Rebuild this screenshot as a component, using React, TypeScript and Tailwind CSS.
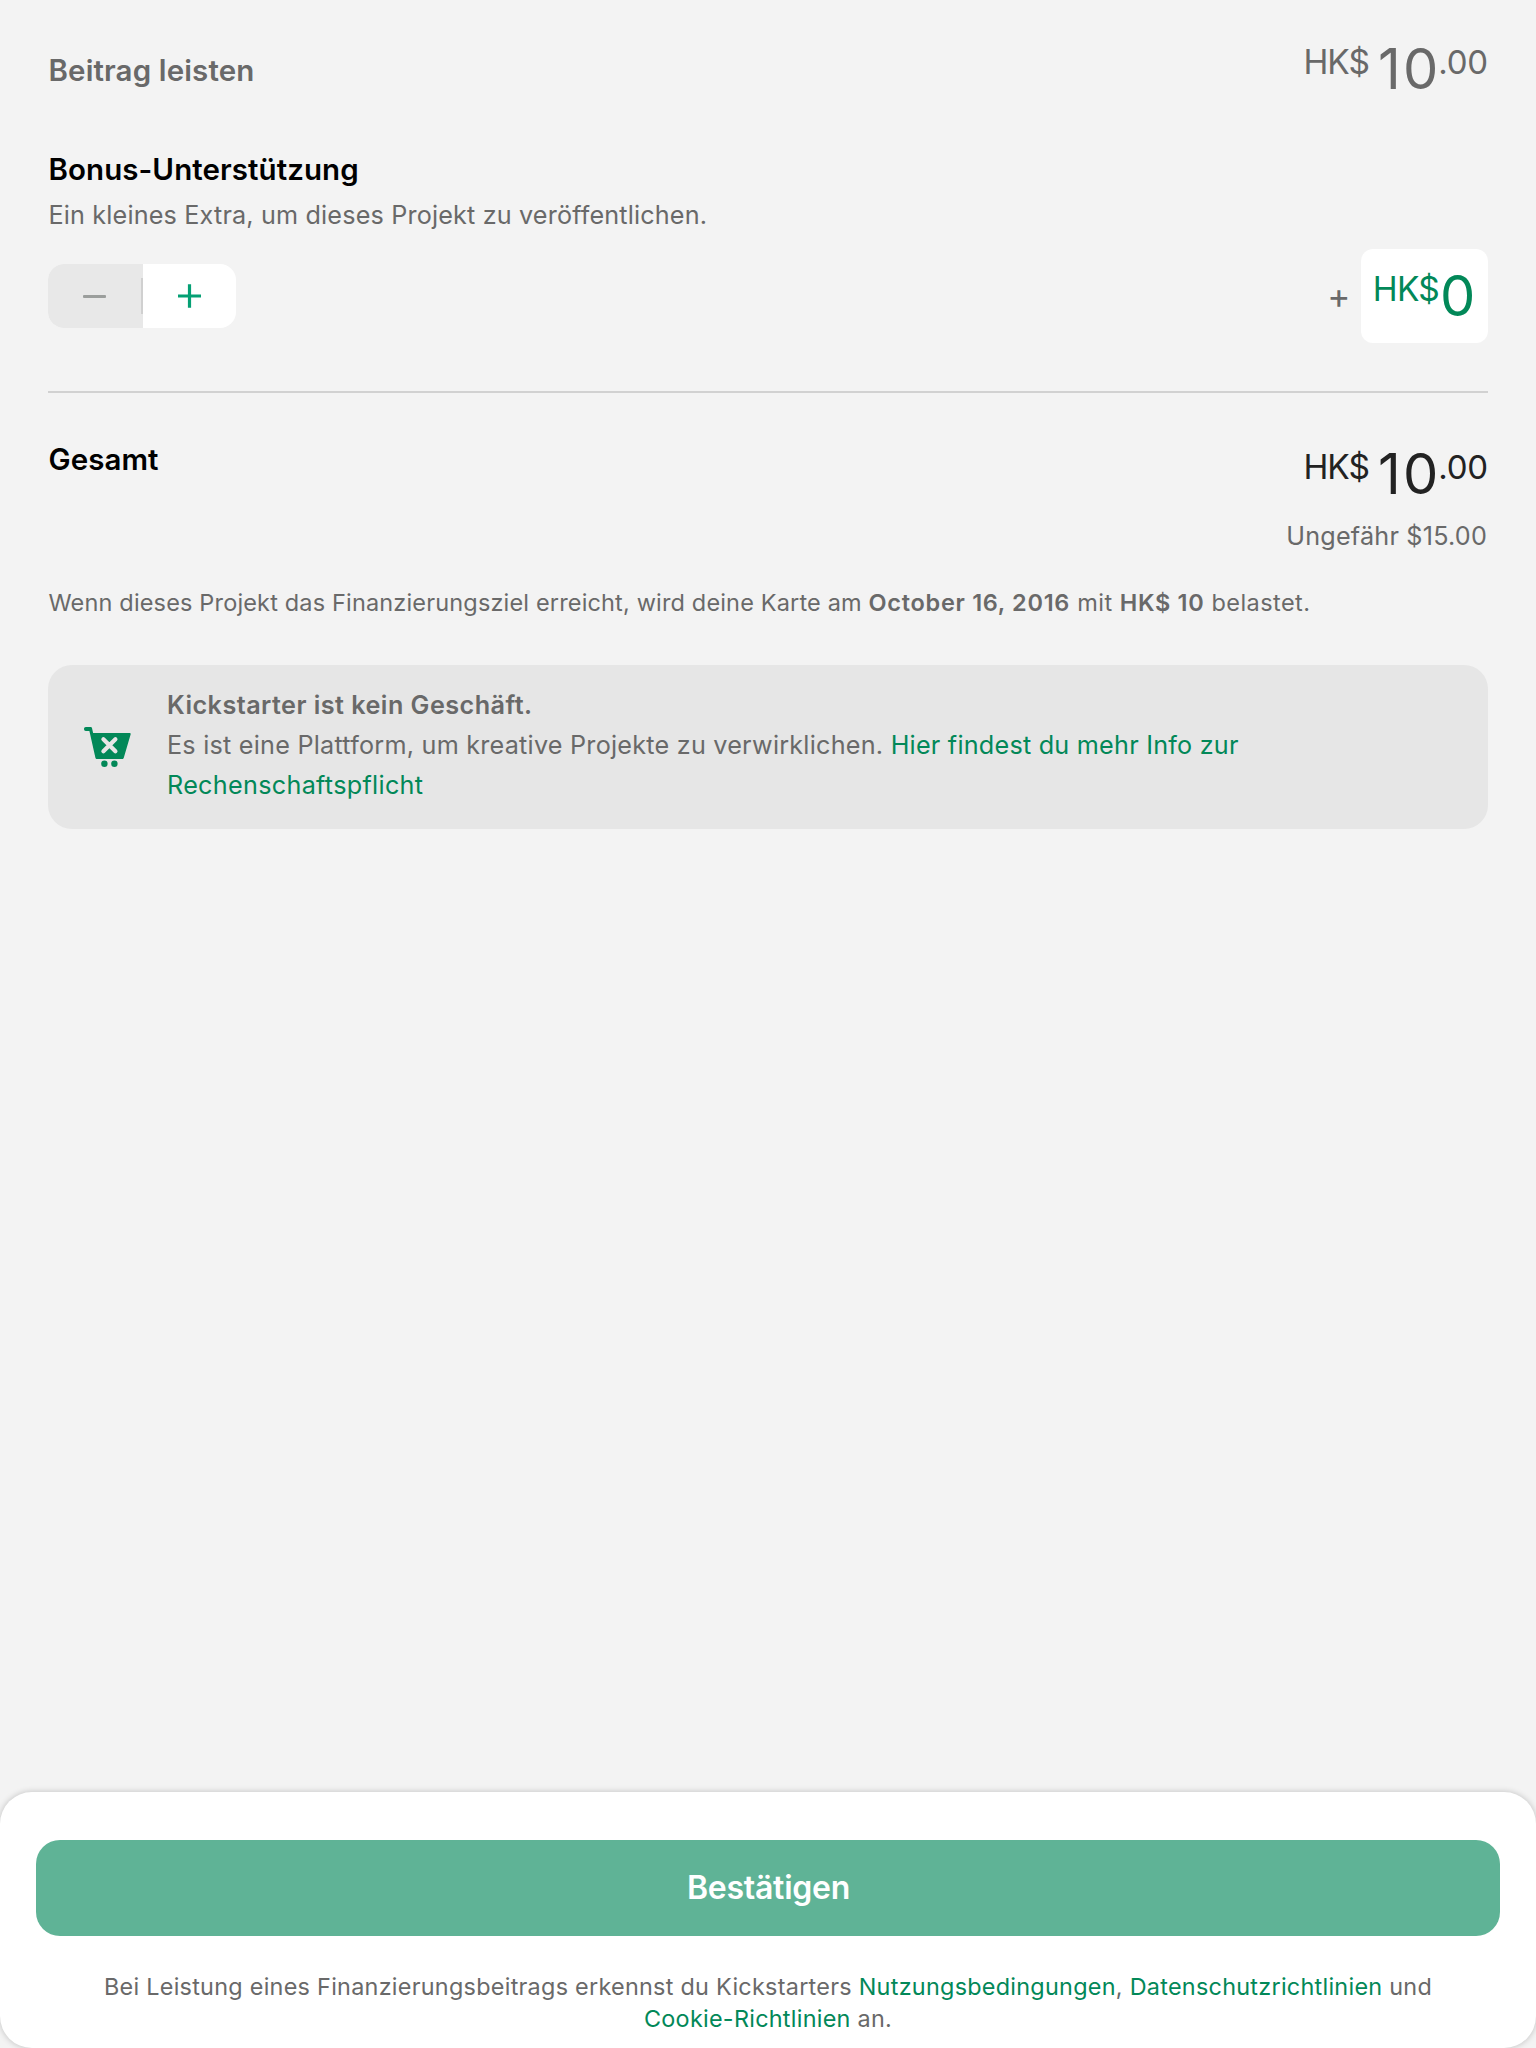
import type { ReactNode } from "react";

function CartIcon() {
  return (
    <svg width="47" height="40" viewBox="0 0 47 40" fill="none" className="block">
      <path
        d="M1.8 0H6.4C7.3 0 7.9 .5 8.1 1.4L9.1 6H45.6C46.5 6 46.9 6.6 46.6 7.5L39.8 30.7C39.5 31.6 39 32 38.2 32H13C12.2 32 11.6 31.6 11.4 30.8L5.4 4H1.8C.7 4 0 3.2 0 2S.7 0 1.8 0Z"
        fill="#028858"
      />
      <path d="M19.4 12.2L31.4 24.2M31.4 12.2L19.4 24.2" stroke="#e6e6e6" strokeWidth="4.2" strokeLinecap="round" />
      <circle cx="20.4" cy="36.8" r="3.2" fill="#028858" />
      <circle cx="30.4" cy="36.8" r="3.2" fill="#028858" />
    </svg>
  );
}

function Amount({ className }: { className: string }) {
  return (
    <div className={`flex h-[54px] items-start whitespace-nowrap ${className}`}>
      <span className="mr-[9px] text-[33.5px] leading-10 tracking-[-1px]">HK$</span>
      <span className="mr-[-2.2px] text-[56px] leading-[54px] tracking-[2.2px]">10</span>
      <span className="text-[33px] leading-10 tracking-[-0.2px]">.00</span>
    </div>
  );
}

function Link({ children }: { children: ReactNode }) {
  return <a className="text-[#028858]">{children}</a>;
}

function Stepper() {
  return (
    <div className="flex h-16 w-[188px] overflow-hidden rounded-2xl bg-white">
      <button className="flex w-[95px] items-center justify-end bg-[#e8e8e8]">
        <span className="mr-[35px] h-[3px] w-[23px] rounded-[1px] bg-[#9b9e9c]" />
        <span className="h-9 w-[2px] bg-[#d0d0d0]" />
      </button>
      <button className="flex flex-1 items-center justify-center">
        <svg width="23" height="24" viewBox="0 0 23 24" className="block">
          <path d="M0 12H23M11.5 .2V23.8" stroke="#05a074" strokeWidth="3.2" />
        </svg>
      </button>
    </div>
  );
}

export default function App() {
  return (
    <div className="flex h-[2048px] w-[1536px] flex-col overflow-hidden bg-[#f3f3f3] font-['Inter',sans-serif] text-[#696969]">
      <main className="flex flex-col px-12 pt-[42px]">
        <div className="flex items-start justify-between">
          <h2 className="mt-2 pl-[0.5px] text-[29.5px] leading-10 font-semibold tracking-[0.13px]">Beitrag leisten</h2>
          <Amount className="text-[#696969]" />
        </div>

        <h2 className="mt-[53px] pl-[0.5px] text-[29.5px] leading-10 font-semibold tracking-[0.07px] text-black">Bonus-Unterstützung</h2>
        <p className="mt-[6px] pl-[0.5px] text-[25.2px] leading-10 tracking-[0.16px]">
          Ein kleines Extra, um dieses Projekt zu veröffentlichen.
        </p>

        <div className="mt-[14px] flex items-center justify-between">
          <Stepper />
          <div className="flex items-center">
            <span className="mr-[10.5px] mb-[2px] text-[35px] leading-10">+</span>
            <div className="flex h-[94px] w-[127px] items-start rounded-xl bg-white pt-5 pl-[11.8px] text-[#028858]">
              <span className="mr-px text-[33.5px] leading-10 tracking-[-0.8px]">HK$</span>
              <span className="text-[56px] leading-[54px]">0</span>
            </div>
          </div>
        </div>

        <div className="mt-12 h-[2px] bg-[#d1d1d1]" />

        <div className="mt-[46px] flex items-start justify-between">
          <h2 className="pl-[0.5px] text-[29.5px] leading-10 font-semibold tracking-[0.05px] text-black">Gesamt</h2>
          <Amount className="mt-2 text-[#222222]" />
        </div>
        <p className="mt-[15px] pr-px text-right text-[25.2px] leading-10 tracking-[0.2px]">Ungefähr $15.00</p>

        <p className="mt-[27px] pl-[0.5px] text-[23.5px] leading-10 tracking-[0.16px] whitespace-nowrap">
          Wenn dieses Projekt das Finanzierungsziel erreicht, wird deine Karte am{" "}
          <b className="font-semibold tracking-[0.7px]">October 16, 2016</b>
          <span className="tracking-[0.5px]"> mit </span>
          <b className="font-semibold tracking-[0.7px]">HK$ 10</b>
          <span className="tracking-[0.45px]"> belastet.</span>
        </p>

        <section className="mt-[42px] flex h-[164px] rounded-3xl bg-[#e6e6e6] pt-5 pl-9">
          <div className="mt-[42px] w-[83px] shrink-0">
            <CartIcon />
          </div>
          <div className="text-[25.2px] leading-10 tracking-[0.23px]">
            <b className="block font-semibold tracking-[0.46px]">Kickstarter ist kein Geschäft.</b>
            Es ist eine Plattform, um kreative Projekte zu verwirklichen.{" "}
            <Link>
              Hier findest du mehr Info zur
              <br />
              <span className="tracking-[0.3px]">Rechenschaftspflicht</span>
            </Link>
          </div>
        </section>
      </main>

      <footer className="mt-auto h-64 rounded-[32px] bg-white px-9 pt-12 shadow-[0_0_6px_rgba(0,0,0,0.22)]">
        <button className="flex h-24 w-full items-center justify-center rounded-3xl bg-[#5fb396] pb-px pl-px text-[32px] leading-10 font-semibold tracking-[-0.25px] text-white">
          Bestätigen
        </button>
        <p className="mt-[35px] text-center text-[23.4px] leading-8 tracking-[0.27px]">
          Bei Leistung eines Finanzierungsbeitrags erkennst du Kickstarters <Link>Nutzungsbedingungen</Link>,{" "}
          <Link>Datenschutzrichtlinien</Link> und
          <br />
          <Link>Cookie-Richtlinien</Link> an.
        </p>
      </footer>
    </div>
  );
}
